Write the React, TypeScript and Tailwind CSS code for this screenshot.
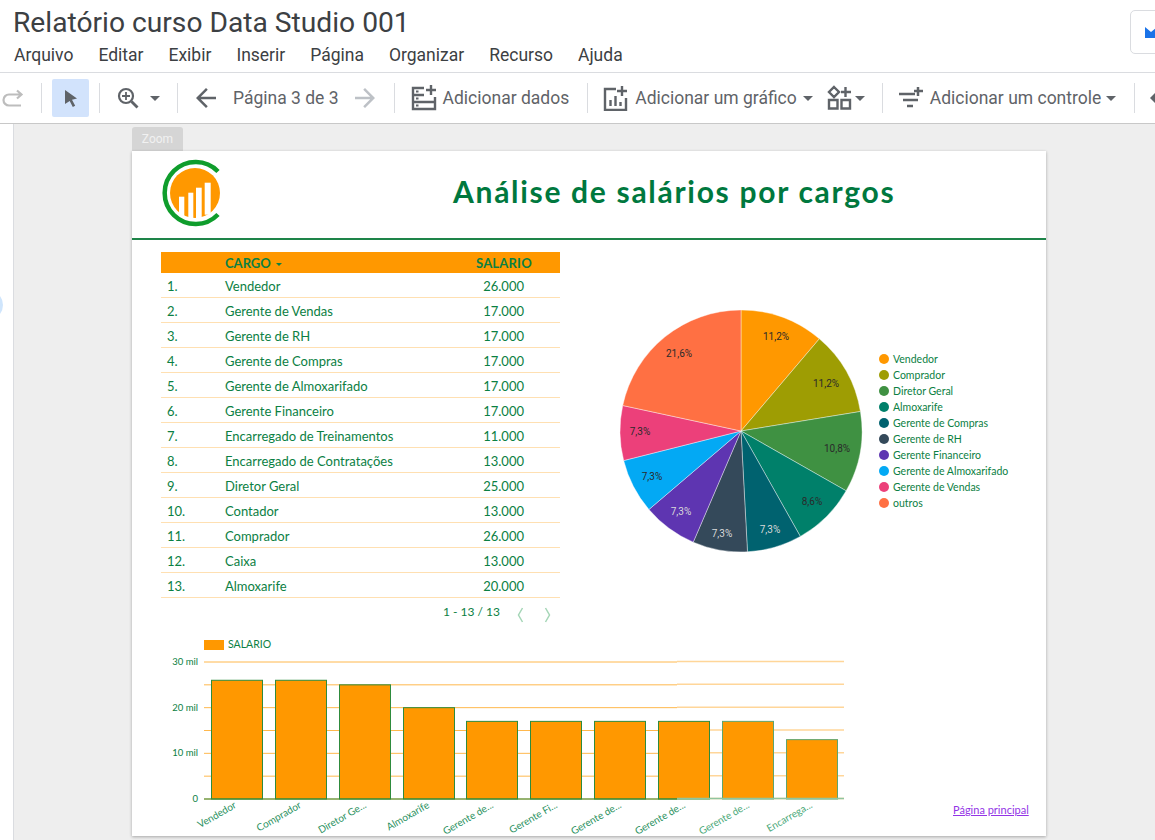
const GREEN = "#0b8043";
const COMIC = "Lato, sans-serif";

const MENU = ["Arquivo", "Editar", "Exibir", "Inserir", "Página", "Organizar", "Recurso", "Ajuda"];

const ROWS: [string, string][] = [
  ["Vendedor", "26.000"],
  ["Gerente de Vendas", "17.000"],
  ["Gerente de RH", "17.000"],
  ["Gerente de Compras", "17.000"],
  ["Gerente de Almoxarifado", "17.000"],
  ["Gerente Financeiro", "17.000"],
  ["Encarregado de Treinamentos", "11.000"],
  ["Encarregado de Contratações", "13.000"],
  ["Diretor Geral", "25.000"],
  ["Contador", "13.000"],
  ["Comprador", "26.000"],
  ["Caixa", "13.000"],
  ["Almoxarife", "20.000"],
];

const SLICES = [
  { name: "Vendedor", pct: 11.2, color: "#ff9800", lx: 777, ly: 337, light: false },
  { name: "Comprador", pct: 11.2, color: "#9e9d03", lx: 827, ly: 384, light: false },
  { name: "Diretor Geral", pct: 10.8, color: "#3f9142", lx: 838, ly: 449, light: false },
  { name: "Almoxarife", pct: 8.6, color: "#00806a", lx: 813, ly: 502, light: false },
  { name: "Gerente de Compras", pct: 7.3, color: "#00626f", lx: 771, ly: 530, light: true },
  { name: "Gerente de RH", pct: 7.3, color: "#34495a", lx: 723, ly: 534, light: true },
  { name: "Gerente Financeiro", pct: 7.3, color: "#5e35b1", lx: 682, ly: 512, light: true },
  { name: "Gerente de Almoxarifado", pct: 7.3, color: "#03a9f4", lx: 653, ly: 477, light: false },
  { name: "Gerente de Vendas", pct: 7.3, color: "#ec407a", lx: 641, ly: 432, light: false },
  { name: "outros", pct: 21.6, color: "#ff7043", lx: 680, ly: 354, light: false },
];

const BARS = [
  { label: "Vendedor", x: 211, v: 26, lx: 237 },
  { label: "Comprador", x: 275, v: 26, lx: 302 },
  { label: "Diretor Ge...", x: 339, v: 25, lx: 367 },
  { label: "Almoxarife", x: 403, v: 20, lx: 430 },
  { label: "Gerente de...", x: 466, v: 17, lx: 494 },
  { label: "Gerente Fi...", x: 530, v: 17, lx: 558 },
  { label: "Gerente de...", x: 594, v: 17, lx: 622 },
  { label: "Gerente de...", x: 658, v: 17, lx: 686 },
  { label: "Gerente de...", x: 722, v: 17, lx: 750 },
  { label: "Encarrega...", x: 786, v: 13, lx: 813 },
];

function Sep({ className }: { className: string }) {
  return <div className={`h-[30px] w-px shrink-0 bg-[#dadce0] ${className}`} />;
}

function Caret({ className = "" }: { className?: string }) {
  return (
    <svg width="10" height="5" viewBox="0 0 10 5" className={`shrink-0 ${className}`}>
      <path d="M0 0h10L5 5z" fill="#5f6368" />
    </svg>
  );
}

function Logo() {
  return (
    <svg width="62" height="68" viewBox="0 0 62 68" className="shrink-0">
      <circle cx="33" cy="34" r="25" fill="#ff9800" />
      <rect x="17" y="37.700" width="5.300" height="22" fill="#fff" />
      <rect x="26.300" y="33.700" width="5" height="26" fill="#fff" />
      <rect x="34" y="28.700" width="5.700" height="31" fill="#fff" />
      <rect x="42.700" y="23.700" width="6" height="32" fill="#fff" />
      <path d="M56 12.500A31 31 0 1 0 56 55.500" fill="none" stroke="#0f9d2c" strokeWidth="4.500" />
    </svg>
  );
}

function Pie() {
  const cx = 742;
  const cy = 431;
  const r = 121;
  let start = 0;
  const total = SLICES.reduce((s, x) => s + x.pct, 0);
  return (
    <svg width="260" height="260" viewBox="612 301 260 260" className="shrink-0">
      {SLICES.map((s) => {
        const a0 = (start / total) * Math.PI * 2;
        start += s.pct;
        const a1 = (start / total) * Math.PI * 2;
        const x0 = cx + r * Math.sin(a0);
        const y0 = cy - r * Math.cos(a0);
        const x1 = cx + r * Math.sin(a1);
        const y1 = cy - r * Math.cos(a1);
        const large = a1 - a0 > Math.PI ? 1 : 0;
        return (
          <path
            key={s.name}
            d={`M${cx} ${cy}L${x0} ${y0}A${r} ${r} 0 ${large} 1 ${x1} ${y1}Z`}
            fill={s.color}
            stroke="#ffffff"
            strokeWidth="0.4"
          />
        );
      })}
      {SLICES.map((s) => (
        <text
          key={s.name}
          x={s.lx}
          y={s.ly + 3}
          textAnchor="middle"
          fontSize="10"
          fontFamily="Roboto, sans-serif"
          fill={s.light ? "#d9d9d9" : "#2a2a2a"}
        >
          {s.pct.toString().replace(".", ",")}%
        </text>
      ))}
    </svg>
  );
}

function BarChart() {
  const y = (v: number) => 798 - (v / 30) * 137;
  return (
    <svg width="700" height="200" viewBox="160 635 700 200" className="shrink-0">
      <rect x="204" y="639" width="20" height="10" fill="#ff9800" />
      <text x="228" y="647" fontSize="10.500" fill={GREEN} fontFamily={COMIC}>
        SALARIO
      </text>
      {[0, 5, 10, 15, 20, 25, 30].map((v) => (
        <g key={v}>
          <line x1="204" x2="677" y1={y(v)} y2={y(v)} stroke="#ffb84d" strokeWidth="1" />
          <line x1="677" x2="844" y1={y(v) - 0.5} y2={y(v) - 0.5} stroke="#ffd699" strokeWidth="1.500" />
        </g>
      ))}
      {[30, 20, 10, 0].map((v) => (
        <text key={v} x="198" y={y(v) + 3} textAnchor="end" fontSize="9.500" fill={GREEN} fontFamily={COMIC}>
          {v === 0 ? "0" : `${v} mil`}
        </text>
      ))}
      {BARS.map((b, i) => (
        <g key={i}>
          <rect
            x={b.x + 0.5}
            y={y(b.v)}
            width="51"
            height={798 - y(b.v)}
            fill="#ff9800"
            stroke={b.x > 677 ? "#5fa56e" : "#2e8b3d"}
            strokeWidth="1"
          />
          <text
            x={b.lx}
            y="806"
            textAnchor="end"
            fontSize="10"
            fill={b.x > 677 ? "#4aa878" : "#2a9160"}
            fontFamily={COMIC}
            transform={`rotate(-30 ${b.lx} 806)`}
          >
            {b.label}
          </text>
        </g>
      ))}
      <line x1="204" x2="677" y1="798" y2="798" stroke="#2e8b3d" strokeWidth="1" />
      <line x1="677" x2="844" y1="797.500" y2="797.500" stroke="#8fc59f" strokeWidth="1.500" />
    </svg>
  );
}

export default function App() {
  return (
    <div className="flex h-[840px] w-[1155px] flex-col overflow-hidden bg-white font-['Roboto',sans-serif]">
      <header className="relative h-[73px] shrink-0 border-b border-[#dadce0] pl-[13px] pt-[6px]">
        <h1 className="whitespace-nowrap text-[28.200px] leading-[34px] text-[#3c4043]">Relatório curso Data Studio 001</h1>
        <nav className="mt-[2px] flex gap-[25px] pl-px text-[17.500px] leading-[26px] text-[#3c4043]">
          {MENU.map((m) => (
            <span key={m}>{m}</span>
          ))}
        </nav>
        <div className="absolute left-[1130px] top-[10px] flex h-[44px] w-[40px] items-center rounded-[5px] border border-[#dadce0] pl-[14px]">
          <svg width="16" height="11" viewBox="0 0 16 11">
            <path d="M0 0l6 5 6-5v11H0z" fill="#1a73e8" />
          </svg>
        </div>
      </header>

      <div className="flex h-[51px] shrink-0 items-center border-b border-[#c8c8c8] text-[17.500px] text-[#5f6368]">
        <svg width="24" height="24" viewBox="0 0 24 24" className="ml-px shrink-0">
          <path d="M20 19.500H8a5.500 5.500 0 0 1 0-11H20M16 4.500l4.500 4-4.500 4" fill="none" stroke="#bdbdbd" strokeWidth="2.200" />
        </svg>
        <Sep className="ml-[16px]" />
        <div className="ml-[10px] flex h-[38px] w-[37px] shrink-0 items-center justify-center rounded-[2px] bg-[#d2e3fc]">
          <svg width="14" height="18" viewBox="0 0 14 18">
            <path d="M1 1l12 8.500-5 1.200 3.200 6-2.400 1.200-3.100-6L1 15z" fill="#5f6368" />
          </svg>
        </div>
        <Sep className="ml-[10px]" />
        <svg width="22" height="22" viewBox="0 0 22 22" className="ml-[17px] shrink-0">
          <circle cx="9" cy="9" r="7" fill="none" stroke="#5f6368" strokeWidth="2.200" />
          <path d="M14.500 14.500l6 6" stroke="#5f6368" strokeWidth="2.800" />
          <path d="M5 9h8M9 5v8" stroke="#5f6368" strokeWidth="1.800" />
        </svg>
        <Caret className="ml-[11px]" />
        <Sep className="ml-[17px]" />
        <svg width="30" height="30" viewBox="0 0 24 24" className="ml-[13px] shrink-0">
          <path d="M20 11H7.830l5.590-5.590L12 4l-8 8 8 8 1.410-1.410L7.830 13H20z" fill="#5f6368" />
        </svg>
        <span className="ml-[12px] whitespace-nowrap">Página 3 de 3</span>
        <svg width="30" height="30" viewBox="0 0 24 24" className="ml-[11px] shrink-0">
          <path d="M12 4l-1.410 1.410L16.170 11H4v2h12.170l-5.580 5.590L12 20l8-8z" fill="#bdc1c6" />
        </svg>
        <Sep className="ml-[14px]" />
        <svg width="28" height="28" viewBox="0 0 28 28" className="ml-[15px] shrink-0" fill="none" stroke="#5f6368" strokeWidth="2.400">
          <path d="M14 4H3v21h22V13M3 11h11M3 18h22M21 1v10M16 6h10" />
          <path d="M6 7.500h2.500M6 14.500h2.500M6 21.500h2.500" strokeWidth="2" />
        </svg>
        <span className="ml-[5px] whitespace-nowrap">Adicionar dados</span>
        <Sep className="ml-[18px]" />
        <svg width="26" height="26" viewBox="0 0 26 26" className="ml-[15px] shrink-0" fill="none" stroke="#5f6368" strokeWidth="2.400">
          <path d="M13 4H2v21h21V13M19 1v10M14 6h10M7.500 21v-6M12.500 21V11M17.500 21v-4" />
        </svg>
        <span className="ml-[6px] whitespace-nowrap">Adicionar um gráfico</span>
        <Caret className="ml-[6px]" />
        <svg width="26" height="26" viewBox="0 0 26 26" className="ml-[14px] shrink-0" fill="none" stroke="#5f6368" strokeWidth="2.400">
          <path d="M7 2l5 5-5 5-5-5zM2 15h8.500v8.500H2zM14.500 15H23v8.500h-8.500zM18.500 2v10M14 7h10" />
        </svg>
        <Caret className="ml-[2px]" />
        <Sep className="ml-[17px]" />
        <svg width="26" height="26" viewBox="0 0 26 26" className="ml-[15px] shrink-0" fill="none" stroke="#5f6368" strokeWidth="2.500">
          <path d="M1 9h16M5 15h15M9 21h6M20 2v9M16 6h9" />
        </svg>
        <span className="ml-[6px] whitespace-nowrap">Adicionar um controle</span>
        <Caret className="ml-[5px]" />
        <Sep className="ml-[18px]" />
        <svg width="8" height="12" viewBox="0 0 8 12" className="ml-[15px] shrink-0">
          <path d="M6 0v12L0 6z" fill="#5f6368" />
        </svg>
      </div>

      <div className="relative flex min-h-0 flex-1 bg-[#eeeeee]">
        <div className="relative w-[14px] shrink-0 overflow-hidden border-r border-[#dadce0] bg-white">
          <div className="absolute left-[-27px] top-[166px] h-[30px] w-[30px] rounded-full bg-[#cfe5fc]" />
        </div>
        <div className="ml-[118px] mt-[3px] flex flex-col items-start">
          <div className="flex h-[24px] w-[51px] items-center justify-center rounded-t-[3px] bg-[#d5d5d5] text-[12px] text-[#f1f1f1]">
            Zoom
          </div>
          <main className="flex h-[685px] w-[914px] flex-col bg-white font-['Lato',sans-serif] text-[#0b8043] shadow-[0_1px_3px_rgba(0,0,0,0.3)]">
            <div className="flex h-[89px] shrink-0 items-center border-b-[2px] border-[#1e8449] pb-[3px] pl-[30px]">
              <Logo />
              <h2 className="mb-[4px] ml-[229px] whitespace-nowrap text-[30px] font-bold tracking-[1.700px] text-[#00783e]">
                Análise de salários por cargos
              </h2>
            </div>

            <div className="flex h-[388px] shrink-0">
              <div className="ml-[29px] mt-[12px] w-[399px] shrink-0">
                <div className="flex h-[21px] items-center bg-[#ff9800] pt-[3px] text-[13px] font-bold">
                  <span className="ml-[64px] flex w-[251px] items-center gap-[5px]">
                    CARGO
                    <svg width="6" height="3" viewBox="0 0 6 3">
                      <path d="M0 0h6L3 3z" fill="#0b8043" />
                    </svg>
                  </span>
                  <span className="tracking-[0.2px]">SALARIO</span>
                </div>
                {ROWS.map(([cargo, sal], i) => (
                  <div
                    key={i}
                    className="flex h-[25px] items-center border-b-[1.500px] border-[#ffe0b2] pt-[3px] text-[13px] last:border-[#fdd98a]"
                  >
                    <span className="ml-[6px] w-[58px] shrink-0">{i + 1}.</span>
                    <span className="w-[255px] shrink-0 whitespace-nowrap">{cargo}</span>
                    <span className="w-[44px] shrink-0 text-right">{sal}</span>
                  </div>
                ))}
                <div className="mt-[5px] flex items-center text-[12px]">
                  <span className="mb-[2px] ml-[282px] w-[74px] shrink-0 whitespace-nowrap">1 - 13 / 13</span>
                  <svg width="7" height="16" viewBox="0 0 7 16" className="mt-[3px] shrink-0">
                    <path d="M5.500 1L1.500 8l4 7" fill="none" stroke="#a5d6b7" strokeWidth="1.500" />
                  </svg>
                  <svg width="7" height="16" viewBox="0 0 7 16" className="ml-[20px] mt-[3px] shrink-0">
                    <path d="M1.500 1l4 7-4 7" fill="none" stroke="#a5d6b7" strokeWidth="1.500" />
                  </svg>
                </div>
              </div>
              <div className="ml-[51px] mt-[61px] flex shrink-0 items-start">
                <Pie />
                <ul className="mt-[50px] flex flex-col text-[10.500px] leading-[16px]">
                  {SLICES.map((s) => (
                    <li key={s.name} className="flex items-center whitespace-nowrap">
                      <span className="ml-[8px] mr-[4px] h-[10px] w-[10px] rounded-full" style={{ backgroundColor: s.color }} />
                      {s.name}
                    </li>
                  ))}
                </ul>
              </div>
            </div>

            <div className="flex min-h-0 flex-1 items-start">
              <div className="ml-[28px] mt-[8px]">
                <BarChart />
              </div>
              <a className="ml-[93px] mt-[174px] whitespace-nowrap text-[11px] text-[#9334e6] underline">Página principal</a>
            </div>
          </main>
        </div>
      </div>
    </div>
  );
}
